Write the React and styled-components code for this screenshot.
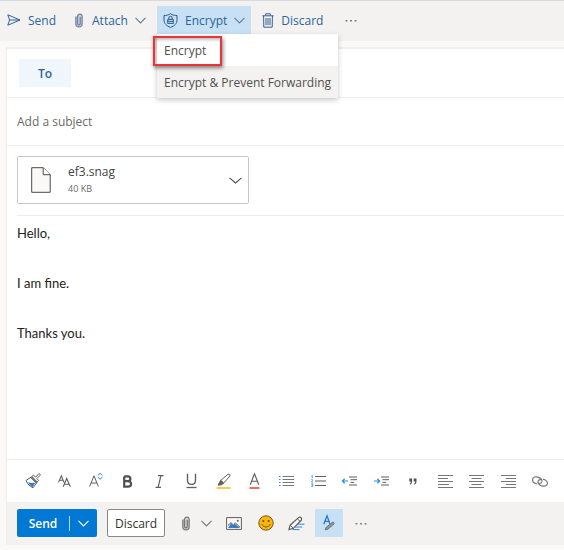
import React from "react";
import styled, { createGlobalStyle } from "styled-components";

const GlobalStyle = createGlobalStyle`
  * { box-sizing: border-box; }
  body {
    margin: 0;
    background: #faf9f8;
    font-family: "Open Sans", "Noto Sans", sans-serif;
    font-size: 12px;
    color: #444;
  }
  button, input, textarea { font: inherit; color: inherit; margin: 0; }
  button { border: 0; padding: 0; background: none; cursor: pointer; }
  svg { display: block; flex: none; overflow: visible; }
`;

const Page = styled.main`
  min-height: 100vh;
  display: flex;
  flex-direction: column;
`;

const CommandBar = styled.header`
  height: 41px;
  display: flex;
  align-items: flex-start;
  gap: 5px;
  padding: 5px 0 0 1px;
  border-top: 1px solid #d5dadf;
  background: #f3f2f1;
`;

const Command = styled.button`
  height: 28px;
  display: flex;
  align-items: center;
  gap: 7px;
  padding: 0 6px;
  color: #2b659b;
  background: ${(p) => (p.$active ? "#c7e0f4" : "transparent")};
`;

const MoreCommand = styled(Command)`
  margin-left: 5px;
`;

const CommandLabel = styled.span`
  min-width: ${(p) => p.$width}px;
  text-align: left;
  white-space: nowrap;
`;

const MenuAnchor = styled.div`
  position: relative;
`;

const Menu = styled.div`
  position: absolute;
  z-index: 2;
  top: 100%;
  left: 0;
  background: #fff;
  box-shadow: 0 2px 5px rgba(0, 0, 0, 0.22);
`;

const MenuItem = styled.button`
  display: block;
  width: 100%;
  height: 32px;
  padding: 0 7px;
  text-align: left;
  white-space: nowrap;
  color: #505050;
  background: ${(p) => (p.$shaded ? "#f3f2f1" : "#fff")};
`;

const Highlight = styled.div`
  position: absolute;
  top: 2px;
  left: -4px;
  width: 69px;
  height: 30px;
  border: 2px solid #ee3338;
  box-shadow: 1px 2px 4px rgba(0, 0, 0, 0.5), inset 1px 2px 3px rgba(0, 0, 0, 0.25);
  pointer-events: none;
`;

const Composer = styled.section`
  flex: 1;
  display: flex;
  flex-direction: column;
  margin: 6px 0 5px 6px;
  border: solid #f0efee;
  border-width: 2px 0 0 1px;
  background: #fff;
`;

const Recipients = styled.div`
  display: flex;
  align-items: center;
  height: 49px;
  padding: 0 12px;
  gap: 12px;
  border-bottom: 1px solid #eeedec;
`;

const ToButton = styled.button`
  width: 52px;
  height: 28px;
  background: #eff6fc;
  color: #2b659b;
  font-weight: 600;
`;

const RecipientInput = styled.input`
  flex: 1;
  min-width: 0;
  border: 0;
  outline: 0;
  background: transparent;
`;

const Subject = styled.input`
  height: 48px;
  padding: 0 10px;
  border: 0;
  border-bottom: 1px solid #eeedec;
  outline: 0;
  background: transparent;
  &::placeholder { color: #6c6a68; opacity: 1; }
`;

const Attachments = styled.div`
  margin-left: 10px;
  padding: 10px 0 11px;
  border-bottom: 1px solid #eeedec;
`;

const FileCard = styled.div`
  display: flex;
  align-items: center;
  width: 232px;
  height: 48px;
  padding: 0 6px 0 13px;
  border: 1px solid #c8c6c4;
  border-radius: 2px;
`;

const FileText = styled.div`
  flex: 1;
  padding-left: 17px;
`;

const FileName = styled.div`
  line-height: 18px;
`;

const FileSize = styled.div`
  font-size: 9px;
  line-height: 16px;
  color: #6c6a68;
`;

const Body = styled.textarea`
  flex: 1;
  min-height: 160px;
  padding: 5px 10px;
  border: 0;
  outline: 0;
  resize: none;
  background: transparent;
  font-family: Lato, "Noto Sans", sans-serif;
  font-size: 13px;
  line-height: 25px;
  color: #222;
`;

const FormatBar = styled.div`
  display: grid;
  grid-template-columns: repeat(17, minmax(0, 1fr));
  height: 43px;
  padding: 0 8px 0 10px;
  border-top: 1px solid #eeedec;
`;

const ToolButton = styled.button`
  height: ${(p) => p.$height || 42}px;
  width: ${(p) => (p.$width ? p.$width + "px" : "auto")};
  display: flex;
  align-items: center;
  justify-content: center;
  background: ${(p) => (p.$active ? "#c7e0f4" : "transparent")};
`;

const ActionBar = styled.footer`
  display: flex;
  align-items: flex-start;
  height: 43px;
  padding: 7px 10px 0;
  background: #f3f2f1;
`;

const SplitSend = styled.div`
  display: flex;
  align-items: center;
  height: 28px;
  margin-right: 10px;
  border-radius: 2px;
  background: #0078d4;
  color: #fff;
`;

const SendButton = styled.button`
  width: 52px;
  height: 28px;
  font-weight: 600;
`;

const SendMore = styled.button`
  width: 28px;
  height: 15px;
  display: flex;
  align-items: center;
  justify-content: center;
  border-left: 1px solid #b9d9f3;
`;

const DiscardButton = styled.button`
  width: 58px;
  height: 28px;
  margin-right: 9px;
  border: 1px solid #8a8886;
  border-radius: 2px;
  background: #fff;
  color: #323130;
  font-weight: 500;
`;

const Glyph = ({ w = 16, h = 16, children, ...rest }) => (
  <svg width={w} height={h} viewBox={`0 0 ${w} ${h}`} fill="none" stroke="#605e5c" strokeWidth="1" aria-hidden="true" {...rest}>
    {children}
  </svg>
);

const Chevron = ({ color = "#5c7f9f", w = 11 }) => (
  <Glyph w={w} h={7} stroke={color} strokeWidth="1.1">
    <path d={`M.5 .8 L${w / 2} 6 L${w - 0.5} .8`} />
  </Glyph>
);

const Clip = ({ color, fill }) => (
  <Glyph w={12} h={15} stroke={color}>
    <path d="M2.8 3.5v7.2a3.2 3.2 0 0 0 6.4 0V3a2.4 2.4 0 0 0-4.7 0v7.5a1.4 1.4 0 0 0 2.8 0V4" fill={fill} strokeWidth="1.2" />
  </Glyph>
);

const Dots = ({ color }) => (
  <Glyph w={12} h={3} stroke="none" fill={color}>
    <path d="M.5 1h2v1.4h-2zM5 1h2v1.4H5zM9.5 1h2v1.4h-2z" />
  </Glyph>
);

const PlaneIcon = () => (
  <Glyph w={14} h={12} stroke="#2b659b">
    <path d="M.8 .8 13 6 .8 11.2 2.6 6ZM2.6 6H13" />
  </Glyph>
);

const ShieldIcon = () => (
  <Glyph w={15} h={15} stroke="#28598d">
    <path d="M7.5 .7C5.4 2.2 3.2 2.5 1 2.5v4.4c0 3.6 2.5 6.1 6.5 7.5 4-1.4 6.5-3.9 6.5-7.5V2.5c-2.2 0-4.4-.3-6.5-1.8Z" />
    <path d="M4.7 6.4h5.6v4H4.7zM5.8 6.2V5a1.7 1.7 0 0 1 3.4 0v1.2M5 8.4h5" />
  </Glyph>
);

const TrashIcon = () => (
  <Glyph w={12} h={15} stroke="#365f93">
    <path d="M.3 2.8h11.4M3.7 2.6V.8h4.6v1.8M1.6 3l.2 11.2h8.4L10.4 3" />
    <path d="M4 5v7.2M6 5v7.2M8 5v7.2" />
  </Glyph>
);

const PageIcon = () => (
  <Glyph w={20} h={26} stroke="#4a4a4a">
    <path d="M.7 .7h11.5l7 7v17.6H.7Z" fill="#faf9f8" />
    <path d="M12.2 .7v7h7" fill="#fff" />
  </Glyph>
);

const PainterIcon = () => (
  <Glyph w={16} h={16}>
    <path d="M1 7.5 6.5 3.8 12 9.4l-4 5.4C5.2 13.6 2.4 11 1 7.5Z" fill="#fff" />
    <path d="M3 9.2c2.4 1 4.8 1 7.4.4L7.8 14C5.6 13 4 11.4 3 9.2Z" fill="#2f7fd6" stroke="none" />
    <path d="m7 3.6 1.6-1.4 2 2L13.6 .8c.9-.5 2 .5 1.5 1.5l-3.2 3.2 1.7 1.9-1.4 1.5Z" fill="#fff" />
    <path d="m5.8 4.4 5.8 5.6" strokeWidth="1.2" />
  </Glyph>
);

const FontIcon = () => (
  <Glyph w={13} h={13}>
    <path d="M.5 7.4 3.3 .9 6 7.4M1.4 5.3h3.8M5.2 11.8 8.7 3.5l3.6 8.3M6.3 9.2h4.8" strokeWidth="1.1" />
  </Glyph>
);

const FontSizeIcon = () => (
  <Glyph w={14} h={16}>
    <path d="M.6 13.5 5 2.8l4.4 10.7M2.1 10h5.8" />
    <path d="m8.8 2.4 2.3-2.1 2.3 2.1M8.8 4.1l2.3 2.1 2.3-2.1" stroke="#2f8ae0" />
  </Glyph>
);

const BoldIcon = () => (
  <Glyph w={11} h={13} stroke="#505050">
    <path d="M2.2 1.4h3.5c3.6 0 3.6 4.8 0 4.8H2.2M2.2 6.2h3.8c4.2 0 4 5.4 0 5.4H2.2V1.4" strokeWidth="2.2" />
  </Glyph>
);

const ItalicIcon = () => (
  <Glyph w={9} h={13}><path d="M3 .6h5.5M.5 12.4H6M5.9 .6 3.1 12.4" strokeWidth="1.2" /></Glyph>
);

const UnderlineIcon = () => (
  <Glyph w={11} h={16}>
    <path d="M1.5 .8v6.4c0 5.6 8 5.6 8 0V.8" strokeWidth="1.4" />
    <path d="M.5 14.5h10" strokeWidth="1.3" />
  </Glyph>
);

const HighlightIcon = () => (
  <Glyph w={15} h={16}>
    <path d="m4.7 7.4 7.4-6.2c1.3-.7 2.6.7 1.8 1.9L7.6 10.2Z" fill="#fff" />
    <path d="m4.7 7.4 3 2.9-2.4 1.5-3 .4 1.1-2.6Z" fill="#605e5c" />
    <path d="M.5 15h14" stroke="#f9ca55" strokeWidth="2" />
  </Glyph>
);

const FontColorIcon = () => (
  <Glyph w={11} h={16}>
    <path d="m1.2 11.8 4.3-11 4.3 11M2.6 8.2h5.8" strokeWidth="1.1" />
    <path d="M.5 15h10" stroke="#e8705f" strokeWidth="2" />
  </Glyph>
);

const BulletsIcon = () => (
  <Glyph w={15} h={12} stroke="#777">
    <path d="M3.5 1.5H15M3.5 4.5H15M3.5 7.5H15M3.5 10.5H15" />
    <path d="M0 1.5h1.5M0 4.5h1.5M0 7.5h1.5M0 10.5h1.5" stroke="#2f8ae0" />
  </Glyph>
);

const NumbersIcon = () => (
  <Glyph w={15} h={12}>
    <path d="M4 1.5h11M4 6h11M4 10.5h11" />
    <path d="M.3 1.2 1.3.5v2.7M.2 4.7h1.5v1L.4 7h1.5M.2 8.7h1.5v2.8H.2M.5 10h1.2" stroke="#2f8ae0" strokeWidth=".8" />
  </Glyph>
);

const IndentIcon = ({ right }) => (
  <Glyph w={15} h={10}>
    <path d="M7 1h8M8.5 3.7H15M8.5 6.4H12M7 9h8" />
    <path d={right ? "M0 5h5.5M3.3 2.8 5.6 5 3.3 7.2" : "M6 5H.5M2.7 2.8.4 5l2.3 2.2"} stroke="#2f8ae0" strokeWidth="1.2" />
  </Glyph>
);

const QuoteIcon = () => (
  <Glyph w={8} h={7} stroke="none" fill="#505050">
    <path d="M.3 .5h2.8v2.7C3.1 5 2.2 6.2.8 6.7V5.5c.7-.4 1-1 1-2H.3ZM4.7 .5h2.8v2.7c0 1.8-.9 3-2.3 3.5V5.5c.7-.4 1-1 1-2H4.7Z" />
  </Glyph>
);

const alignPaths = {
  left: "M0 .5h15M0 3.5h10M0 6.5h15M0 9.5h11M0 12.5h15",
  center: "M0 .5h15M2.5 3.5h10M0 6.5h15M2.5 9.5h10M0 12.5h15",
  right: "M0 .5h15M5 3.5h10M0 6.5h15M5 9.5h10M0 12.5h15",
};
const AlignIcon = ({ side }) => <Glyph w={15} h={13} stroke="#777"><path d={alignPaths[side]} /></Glyph>;

const LinkIcon = () => (
  <Glyph w={16} h={11} stroke="#777">
    <path d="M5.2 8C2.2 7.4.4 5.3.6 3.4.8 1 4 .2 6.7 1.4c2.6 1.1 4 3.3 3 4.9-.6 1-1.7 1.3-2.8 1.1" strokeWidth="1.2" />
    <path d="M10.8 3.1c3 .6 4.8 2.7 4.6 4.5-.2 2.4-3.4 3.2-6.1 2.1-2.6-1.1-4-3.3-3-5 .6-1 1.7-1.2 2.8-1" strokeWidth="1.2" />
  </Glyph>
);

const PictureIcon = () => (
  <Glyph w={16} h={13}>
    <path d="M.6 .6h14.8v11.8H.6Z" fill="#f7f7f7" />
    <path d="m2 11 3-4.7 2 2 1.6-1.8L14 11Z" fill="#2f7fd6" stroke="none" />
    <path d="m2 8.3 3-2.6 5.4 5.3M8 7.2l1.6-1.1L14 10.2" />
    <circle cx="11.8" cy="3.8" r="1" fill="#605e5c" stroke="none" />
  </Glyph>
);

const SmileIcon = () => (
  <Glyph w={16} h={16} stroke="#765b1c">
    <circle cx="8" cy="8" r="7.2" fill="#fbb40a" />
    <circle cx="5.4" cy="6" r="1" fill="#5a4a23" stroke="none" />
    <circle cx="10.6" cy="6" r="1" fill="#5a4a23" stroke="none" />
    <path d="M3.9 9.2c1.3 3.6 6.9 3.6 8.2 0" />
  </Glyph>
);

const SketchIcon = () => (
  <Glyph w={17} h={15}>
    <path d="M9 8.2h7.5M7 11h7.2M4.5 13.6h7" stroke="#2f8ae0" />
    <path d="m.9 13.6 1.3-4.4 8.6-7.8c1.4-1 3.7 1.1 2.6 2.6l-8 8.3Z" fill="#f8f8f8" strokeWidth="1.2" />
    <path d="m2.2 9.2 3.2 3.1M9.3 2.7l2.8 2.7" />
  </Glyph>
);

const FormatToggleIcon = () => (
  <Glyph w={12} h={16}>
    <path d="M.8 9.2 4 .8l3.1 8.4M1.9 6.4h4.3" stroke="#2877c8" strokeWidth="1.3" />
    <path d="m2.3 14.8.8-2.4 6.3-5.1c1-.5 2.2.7 1.6 1.7l-6.2 5.2Z" fill="#8d98a3" stroke="#65717c" />
  </Glyph>
);

const formatTools = [
  ["Format painter", <PainterIcon />],
  ["Font", <FontIcon />],
  ["Font size", <FontSizeIcon />],
  ["Bold", <BoldIcon />],
  ["Italic", <ItalicIcon />],
  ["Underline", <UnderlineIcon />],
  ["Highlight", <HighlightIcon />],
  ["Font color", <FontColorIcon />],
  ["Bullets", <BulletsIcon />],
  ["Numbering", <NumbersIcon />],
  ["Decrease indent", <IndentIcon />],
  ["Increase indent", <IndentIcon right />],
  ["Quote", <QuoteIcon />],
  ["Align left", <AlignIcon side="left" />],
  ["Align center", <AlignIcon side="center" />],
  ["Align right", <AlignIcon side="right" />],
  ["Insert link", <LinkIcon />],
];

export default function App() {
  return (
    <Page>
      <GlobalStyle />
      <CommandBar>
        <Command><PlaneIcon /><CommandLabel $width={28}>Send</CommandLabel></Command>
        <Command>
          <Clip color="#7684a6" fill="#c1c8d8" />
          <CommandLabel $width={36}>Attach</CommandLabel>
          <Chevron />
        </Command>
        <MenuAnchor>
          <Command $active aria-haspopup="menu" aria-expanded="true">
            <ShieldIcon />
            <CommandLabel $width={40}>Encrypt</CommandLabel>
            <Chevron />
          </Command>
          <Menu role="menu">
            <MenuItem role="menuitem">Encrypt</MenuItem>
            <MenuItem role="menuitem" $shaded>Encrypt &amp; Prevent Forwarding</MenuItem>
            <Highlight />
          </Menu>
        </MenuAnchor>
        <Command><TrashIcon /><CommandLabel $width={41}>Discard</CommandLabel></Command>
        <MoreCommand aria-label="More commands"><Dots color="#6f8294" /></MoreCommand>
      </CommandBar>

      <Composer>
        <Recipients>
          <ToButton>To</ToButton>
          <RecipientInput aria-label="To recipients" />
        </Recipients>
        <Subject aria-label="Subject" placeholder="Add a subject" />
        <Attachments>
          <FileCard>
            <PageIcon />
            <FileText>
              <FileName>ef3.snag</FileName>
              <FileSize>40 KB</FileSize>
            </FileText>
            <button aria-label="Attachment actions"><Chevron color="#505050" w={13} /></button>
          </FileCard>
        </Attachments>
        <Body aria-label="Message body" spellCheck={false} defaultValue={"Hello,\n\nI am fine.\n\nThanks you."} />
        <FormatBar role="toolbar" aria-label="Formatting">
          {formatTools.map(([name, icon]) => (
            <ToolButton key={name} aria-label={name}>{icon}</ToolButton>
          ))}
        </FormatBar>
        <ActionBar>
          <SplitSend>
            <SendButton>Send</SendButton>
            <SendMore aria-label="Send options"><Chevron color="#fff" /></SendMore>
          </SplitSend>
          <DiscardButton>Discard</DiscardButton>
          <ToolButton $height={28} $width={24} aria-label="Attach"><Clip color="#777" fill="#ccc" /></ToolButton>
          <ToolButton $height={28} $width={16} aria-label="Attach options"><Chevron color="#777" /></ToolButton>
          <ToolButton $height={28} $width={40} aria-label="Insert picture"><PictureIcon /></ToolButton>
          <ToolButton $height={28} $width={24} aria-label="Emoji"><SmileIcon /></ToolButton>
          <ToolButton $height={28} $width={37} aria-label="Draw"><SketchIcon /></ToolButton>
          <ToolButton $height={28} $width={28} $active aria-label="Formatting options"><FormatToggleIcon /></ToolButton>
          <ToolButton $height={28} $width={36} aria-label="More options"><Dots color="#8a8886" /></ToolButton>
        </ActionBar>
      </Composer>
    </Page>
  );
}
